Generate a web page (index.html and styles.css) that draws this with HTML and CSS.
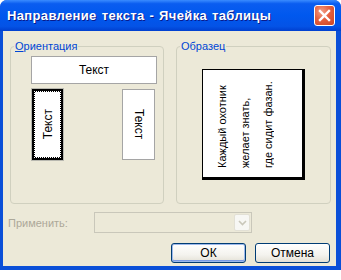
FILE: index.html
```html
<!DOCTYPE html>
<html lang="ru">
<head>
    <meta charset="UTF-8">
    <title>Направление текста - Ячейка таблицы</title>
    <link rel="stylesheet" href="styles.css">
</head>
<body>
    <div class="window">
        <div class="titlebar">
            <span class="title">Направление текста - Ячейка таблицы</span>
            <span class="close">
                <svg width="13" height="13" viewBox="0 0 13 13">
                    <path d="M2 2 L11 11 M11 2 L2 11" stroke="#fff" stroke-width="2.4" stroke-linecap="square"/>
                </svg>
            </span>
        </div>
        <div class="dialog">
            <div class="groups">
                <fieldset class="group orient">
                    <legend><u>О</u>риентация</legend>
                    <div class="opt horiz">Текст</div>
                    <div class="vert-row">
                        <div class="ring"><div class="opt vert up selected"><span>Текст</span></div></div>
                        <div class="opt vert down"><span>Текст</span></div>
                    </div>
                </fieldset>
                <fieldset class="group sample">
                    <legend>Образец</legend>
                    <div class="sample-box">
                        <p>Каждый охотник<br>желает знать,<br>где сидит фазан.</p>
                    </div>
                </fieldset>
            </div>
            <div class="apply-row">
                <span class="apply-label">Применить:</span>
                <div class="combo">
                    <span class="combo-btn">
                        <svg width="9" height="6" viewBox="0 0 9 6">
                            <path d="M1 1 L4.5 4.5 L8 1" fill="none" stroke="#c9c7ba" stroke-width="1.6"/>
                        </svg>
                    </span>
                </div>
            </div>
            <div class="buttons">
                <button class="btn default">ОК</button>
                <button class="btn">Отмена</button>
            </div>
        </div>
    </div>
</body>
</html>
```

FILE: styles.css
```css
* {
    margin: 0;
    padding: 0;
    box-sizing: border-box;
}
body {
    background: #fff;
    font-family: 'Liberation Sans', Arial, sans-serif;
    font-size: 11px;
}
.window {
    width: 341px;
    height: 270px;
    display: flex;
    flex-direction: column;
    background: #0a4fd8;
    padding: 0 5px 4px 3px;
    border-radius: 7px 7px 0 0;
}
.titlebar {
    height: 31px;
    margin: 0 -5px 0 -3px;
    padding: 0 6px 0 7px;
    display: flex;
    align-items: center;
    justify-content: space-between;
    border-radius: 7px 7px 0 0;
    background: linear-gradient(#3a8cff 0%, #0a5df0 12%, #0058ee 50%, #0453e6 85%, #003fcf 100%);
}
.title {
    color: #fff;
    font-weight: bold;
    font-size: 13px;
    text-shadow: 1px 1px 0 #0a1a8a;
    letter-spacing: 0.35px;
    word-spacing: 1px;
}
.close {
    width: 21px;
    height: 21px;
    display: flex;
    align-items: center;
    justify-content: center;
    border: 1px solid #fff;
    border-radius: 3px;
    background: radial-gradient(circle at 35% 30%, #f3a088 0%, #e5603f 45%, #cc4422 100%);
}
.dialog {
    flex: 1;
    background: #ece9d8;
    padding: 9px 5px 0 7px;
    display: flex;
    flex-direction: column;
}
.groups {
    display: flex;
    gap: 12px;
}
.group {
    border: 1px solid #d0d0bf;
    border-radius: 4px;
}
.group legend {
    color: #0046d5;
    padding: 0 1px;
    line-height: 13px;
}
.group legend u {
    text-decoration-thickness: 1px;
}
.orient {
    width: 154px;
    padding: 3px 0 42px 20px;
}
.orient legend {
    margin-left: -17px;
}
.sample {
    width: 155px;
    padding: 16px 0 22px 25px;
}
.sample legend {
    margin-left: -22px;
}
.opt {
    background: #fff;
    border: 1px solid #a5a5a5;
    font-size: 12px;
    color: #000;
    display: flex;
    align-items: center;
    justify-content: center;
}
.horiz {
    width: 126px;
    height: 28px;
}
.vert-row {
    display: flex;
    margin-top: 4px;
    gap: 58px;
    align-items: center;
}
.ring {
    border: 1px solid #b8b8b0;
}
.vert {
    width: 33px;
    height: 71px;
}
.ring .vert {
    width: 31px;
    border: 3px solid #000;
    outline: 1px dotted #fff;
    outline-offset: -3px;
}
.vert span {
    writing-mode: vertical-rl;
}
.up span {
    transform: rotate(180deg);
}
.sample-box {
    width: 103px;
    height: 111px;
    background: #fff;
    border: 1px solid #000;
    border-right-width: 3px;
    border-bottom-width: 3px;
    display: flex;
}
.sample-box p {
    flex: 1;
    writing-mode: vertical-rl;
    transform: rotate(180deg);
    line-height: 23px;
    padding: 9px 8px 0 0;
    color: #000;
}
.apply-row {
    display: flex;
    align-items: center;
    margin-top: 8px;
}
.apply-label {
    color: #aca899;
    width: 86px;
    margin-left: -2px;
}
.combo {
    width: 158px;
    height: 21px;
    border: 1px solid #c9c7ba;
    display: flex;
    justify-content: flex-end;
    padding: 1px;
}
.combo-btn {
    width: 16px;
    display: flex;
    align-items: center;
    justify-content: center;
    background: #f7f7f4;
    border: 1px solid #e2e0d5;
    border-radius: 2px;
}
.buttons {
    display: flex;
    justify-content: flex-end;
    gap: 9px;
    margin-top: 10px;
    padding-right: 1px;
}
.btn {
    width: 75px;
    height: 20px;
    font-family: 'Liberation Sans', Arial, sans-serif;
    font-size: 12px;
    color: #000;
    border: 1px solid #003c74;
    border-radius: 3px;
    background: linear-gradient(#ffffff 0%, #f4f3ee 60%, #e3e1d6 100%);
}
.btn.default {
    box-shadow: inset 0 0 0 1px #9db9eb, inset 0 -1px 0 1px #7a9be6;
}
```
